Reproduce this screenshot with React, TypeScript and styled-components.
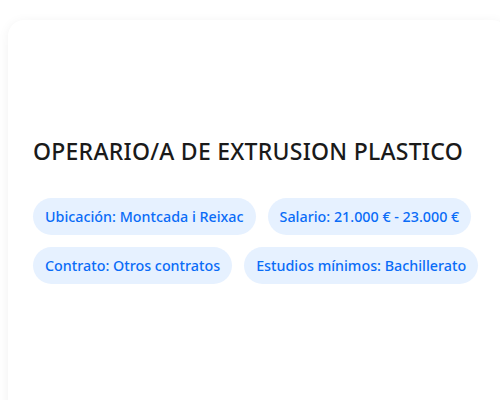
import React from 'react';
import styled, { createGlobalStyle } from 'styled-components';

const GlobalStyle = createGlobalStyle`
    html, body {
        margin: 0;
        padding: 0;
        background: #ffffff;
        overflow: hidden;
    }
    body {
        padding: 20px 0 0 8px;
        font-family: 'Noto Sans', 'Open Sans', sans-serif;
    }
`;

const Card = styled.div`
    width: 500px;
    min-height: 420px;
    box-sizing: border-box;
    padding: 115px 25px 24px;
    background: #ffffff;
    border-radius: 16px;
    box-shadow: 0 2px 12px rgba(0, 0, 0, 0.06);
`;

const Title = styled.h1`
    margin: 0 0 31px;
    font-size: 23px;
    font-weight: 500;
    color: #1a1a1a;
    letter-spacing: 0.25px;
`;

const Tags = styled.div`
    display: flex;
    flex-wrap: wrap;
    gap: 12px;
`;

const Tag = styled.span`
    display: inline-flex;
    align-items: center;
    height: 37px;
    padding: 0 12px;
    border-radius: 19px;
    background: #e6f1ff;
    color: #0a6cf7;
    font-size: 14.3px;
    font-weight: 500;
    white-space: nowrap;
`;

const tags = [
    'Ubicación: Montcada i Reixac',
    'Salario: 21.000 € - 23.000 €',
    'Contrato: Otros contratos',
    'Estudios mínimos: Bachillerato',
];

const App: React.FC = (): JSX.Element => {
    return (
        <>
            <GlobalStyle />
            <Card>
                <Title>OPERARIO/A DE EXTRUSION PLASTICO</Title>
                <Tags>
                    {tags.map((t) => (
                        <Tag key={t}>{t}</Tag>
                    ))}
                </Tags>
            </Card>
        </>
    );
};

export default App;
